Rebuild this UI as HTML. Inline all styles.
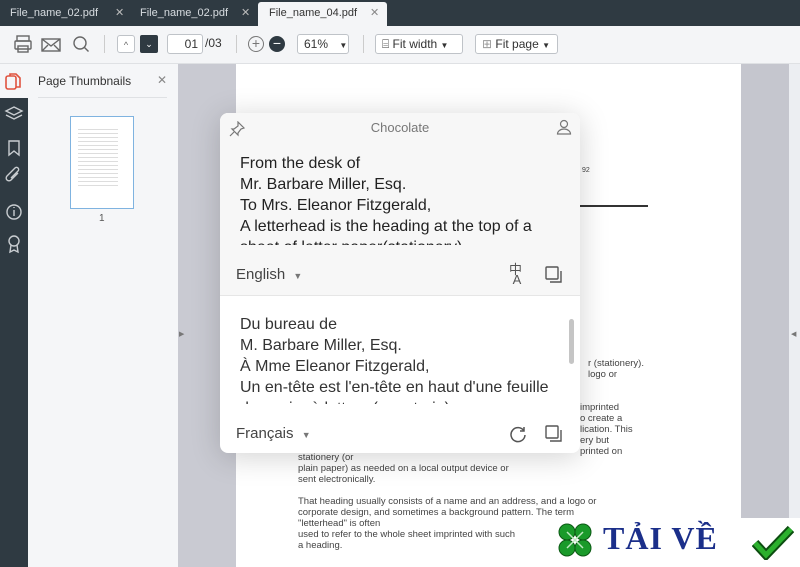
<!DOCTYPE html>
<html><head><meta charset="utf-8"><style>
*{margin:0;padding:0;box-sizing:border-box}
body{width:800px;height:567px;overflow:hidden;position:relative;font-family:"Liberation Sans","DejaVu Sans",sans-serif;background:#fff}
.abs{position:absolute}
.tabbar{left:0;top:0;width:800px;height:26px;background:#2f3a42}
.tab{top:0;height:26px;font-size:11px;color:#d8dde1;line-height:26px;white-space:nowrap}
.tb{left:0;top:26px;width:800px;height:38px;background:#f4f5f7;border-bottom:1px solid #dfe1e4}
.btn{border:1px solid #bfc3c8;border-radius:3px;background:#fff;height:20px;font-size:12px;line-height:18px;color:#333;white-space:nowrap}
.rail{left:0;top:98px;width:28px;height:469px;background:#2f3a42}
.side{left:28px;top:64px;width:150px;height:503px;background:#f5f6f8}
.gray{left:178px;top:64px;width:58px;height:503px;background:#c9cad2}
.gray2{left:741px;top:64px;width:48px;height:503px;background:#c5c6ce}
.strip{left:789px;top:64px;width:11px;height:503px;background:#eceef2}
.page{left:236px;top:64px;width:505px;height:503px;background:#fff}
.doc{font-size:9.5px;color:#444;line-height:11px}
.pop{left:220px;top:113px;width:360px;height:340px;background:#fff;border-radius:8px;box-shadow:0 4px 30px rgba(0,0,0,.18);overflow:hidden}
.ptxt{font-size:16px;color:#222;line-height:21px;left:20px;white-space:nowrap}
</style></head><body>
<div class="abs tabbar"></div>
<div class="abs tab" style="left:10px">File_name_02.pdf</div>
<div class="abs tab" style="left:115px;color:#bbb">✕</div>
<div class="abs tab" style="left:140px">File_name_02.pdf</div>
<div class="abs tab" style="left:241px;color:#bbb">✕</div>
<div class="abs" style="left:258px;top:2px;width:129px;height:24px;background:#f4f5f7;border-radius:3px 3px 0 0"></div>
<div class="abs tab" style="left:269px;color:#333">File_name_04.pdf</div>
<div class="abs tab" style="left:370px;color:#888">✕</div>

<div class="abs tb"></div>
<svg class="abs" style="left:14px;top:34px" width="80" height="22" fill="none" stroke="#666" stroke-width="1.4">
<rect x="3" y="2" width="12" height="5"/><rect x="1" y="7" width="16" height="8" rx="1"/><rect x="4" y="12" width="10" height="6"/>
<rect x="28" y="5" width="18" height="12"/><path d="M28 5l9 7 9-7M28 17l6-6M46 17l-6-6"/>
<circle cx="66" cy="9" r="6"/><path d="M70.5 13.5l4 4"/></svg>
<div class="abs" style="left:104px;top:35px;width:1px;height:18px;background:#ccc"></div>
<div class="abs btn" style="left:117px;top:35px;width:18px;height:18px;text-align:center;font-size:9px;color:#666">^</div>
<div class="abs" style="left:140px;top:35px;width:18px;height:18px;background:#2f3a42;border-radius:2px;color:#fff;font-size:9px;text-align:center;line-height:18px">⌄</div>
<div class="abs btn" style="left:167px;top:34px;width:36px;text-align:right;padding-right:4px">01</div>
<div class="abs" style="left:205px;top:36px;font-size:12px;color:#333">/03</div>
<div class="abs" style="left:236px;top:35px;width:1px;height:18px;background:#ccc"></div>
<div class="abs" style="left:248px;top:36px;width:16px;height:16px;border:1.3px solid #777;border-radius:50%;text-align:center;line-height:13px;color:#777;font-size:14px">+</div>
<div class="abs" style="left:269px;top:36px;width:16px;height:16px;background:#2f3a42;border-radius:50%;text-align:center;line-height:15px;color:#fff;font-size:14px">−</div>
<div class="abs btn" style="left:297px;top:34px;width:52px;padding-left:6px">61% <span style="font-size:8px;margin-left:8px">▼</span></div>
<div class="abs" style="left:363px;top:35px;width:1px;height:18px;background:#ccc"></div>
<div class="abs btn" style="left:375px;top:34px;width:88px;padding-left:6px">⌸ Fit width <span style="font-size:8px">▼</span></div>
<div class="abs btn" style="left:475px;top:34px;width:83px;padding-left:6px"><span style="color:#999">⊞</span> Fit page <span style="font-size:8px">▼</span></div>

<div class="abs" style="left:0;top:64px;width:28px;height:34px;background:#f5f6f8"></div>
<svg class="abs" style="left:5px;top:72px" width="16" height="18" fill="none" stroke="#e0533f" stroke-width="1.6"><rect x="1" y="4" width="10" height="13" rx="2"/><path d="M5 4V2h6l4 4v9h-4"/></svg>
<div class="abs rail"></div>
<svg class="abs" style="left:4px;top:105px" width="20" height="160" fill="none" stroke="#c9cdd1" stroke-width="1.4">
<path d="M10 2l8 4-8 4-8-4zM2 10l8 4 8-4"/>
<path d="M5 36h10v14l-5-4-5 4z"/>
<path d="M14 68l-7 7a2.5 2.5 0 0 1-4-4l8-8a1.7 1.7 0 0 1 3 3l-7 7"/>
<circle cx="10" cy="107" r="7"/><path d="M10 105v6M10 102v1"/>
<circle cx="10" cy="136" r="5"/><path d="M7 140l-1 7 4-2 4 2-1-7"/></svg>
<div class="abs side"></div>
<div class="abs" style="left:38px;top:74px;font-size:12px;color:#333">Page Thumbnails</div>
<div class="abs" style="left:157px;top:73px;font-size:12px;color:#888">✕</div>
<div class="abs" style="left:38px;top:97px;width:129px;height:1px;background:#dfe1e4"></div>
<div class="abs" style="left:70px;top:116px;width:64px;height:93px;background:#fff;border:1.5px solid #7fb3e0"></div>
<div class="abs" style="left:78px;top:126px;width:40px;height:60px;background:repeating-linear-gradient(#fff 0 3px,#ddd 3px 4px)"></div>
<div class="abs" style="left:99px;top:213px;font-size:10px;color:#555">1</div>

<div class="abs gray"></div>
<div class="abs" style="left:179px;top:330px;font-size:7px;color:#777">▶</div>
<div class="abs page"></div>
<div class="abs gray2"></div>
<div class="abs strip"></div>
<div class="abs" style="left:791px;top:330px;font-size:7px;color:#777">◀</div>

<div class="abs doc" style="left:582px;top:165px;font-size:7px">92</div>
<div class="abs" style="left:580px;top:205px;width:68px;height:2px;background:#333"></div>
<div class="abs doc" style="left:588px;top:358px">r (stationery).<br>logo or</div>
<div class="abs doc" style="left:580px;top:402px">imprinted<br>o create a<br>lication. This<br>ery but<br>printed on</div>
<div class="abs doc" style="left:298px;top:452px">stationery (or<br>plain paper) as needed on a local output device or<br>sent electronically.<br><br>That heading usually consists of a name and an address, and a logo or<br>corporate design, and sometimes a background pattern. The term<br>"letterhead" is often<br>used to refer to the whole sheet imprinted with such<br>a heading.</div>

<div class="abs pop">
 <div class="abs" style="left:0;top:0;width:360px;height:183px;background:#f7f7f7;border-bottom:1px solid #e6e6e6"></div>
 <svg class="abs" style="left:9px;top:8px" width="16" height="16" fill="none" stroke="#777" stroke-width="1.2"><path d="M9 1l6 6-3 1-3 4 0 2-6-6 2 0 4-3zM5 11l-4 4"/></svg>
 <div class="abs" style="left:0;top:7px;width:360px;text-align:center;font-size:13px;color:#777">Chocolate</div>
 <svg class="abs" style="left:336px;top:6px" width="16" height="16" fill="none" stroke="#777" stroke-width="1.2"><circle cx="8" cy="5" r="3.5"/><path d="M1.5 15a6.5 5 0 0 1 13 0z"/></svg>
 <div class="abs" style="left:0;top:40px;width:360px;height:92px;overflow:hidden">
  <div class="abs ptxt" style="top:0">From the desk of<br>Mr. Barbare Miller, Esq.<br>To Mrs. Eleanor Fitzgerald,<br>A letterhead is the heading at the top of a<br>sheet of letter paper(stationery)</div>
 </div>
 <div class="abs" style="left:16px;top:153px;font-size:15px;color:#444">English <span style="font-size:9px;color:#777;margin-left:4px">▼</span></div>
 <div class="abs" style="left:289px;top:152px;font-size:13px;color:#555;line-height:10px">中<br>&nbsp;A</div>
 <svg class="abs" style="left:325px;top:153px" width="18" height="18" fill="none" stroke="#555" stroke-width="1.4"><rect x="1" y="1" width="12" height="12" rx="1"/><path d="M16 5v11H5"/></svg>
 <div class="abs" style="left:0;top:201px;width:360px;height:90px;overflow:hidden">
  <div class="abs ptxt" style="top:0;color:#333">Du bureau de<br>M. Barbare Miller, Esq.<br>À Mme Eleanor Fitzgerald,<br>Un en-tête est l'en-tête en haut d'une feuille<br>de papier à lettres (papeterie)</div>
 </div>
 <div class="abs" style="left:349px;top:206px;width:5px;height:45px;background:#c5c5c5;border-radius:3px"></div>
 <div class="abs" style="left:16px;top:312px;font-size:15px;color:#444">Français <span style="font-size:9px;color:#777;margin-left:4px">▼</span></div>
 <svg class="abs" style="left:289px;top:312px" width="18" height="18" fill="none" stroke="#555" stroke-width="1.5"><path d="M15 6A7 7 0 1 0 16 10M15 2v4h-4"/></svg>
 <svg class="abs" style="left:325px;top:312px" width="18" height="18" fill="none" stroke="#555" stroke-width="1.4"><rect x="1" y="1" width="12" height="12" rx="1"/><path d="M16 5v11H5"/></svg>
</div>

<div class="abs" style="left:553px;top:518px;width:247px;height:49px;background:#fff"></div>
<svg class="abs" style="left:555px;top:520px" width="40" height="42"><g fill="#1a9a2a" stroke="#0c5a14" stroke-width="1"><circle cx="12" cy="12" r="8"/><circle cx="28" cy="12" r="8"/><circle cx="12" cy="28" r="8"/><circle cx="28" cy="28" r="8"/></g><path d="M20 20l8 8M20 20l-8 8M20 20l8-8M20 20l-8-8" stroke="#bfe8c0" stroke-width="1.5"/></svg>
<div class="abs" style="left:603px;top:520px;font-family:'Liberation Serif',serif;font-weight:bold;font-size:32px;color:#1b2f8a;letter-spacing:1px">TẢI VỀ</div>
<svg class="abs" style="left:752px;top:525px" width="42" height="35"><path d="M3 18l11 12L39 4" fill="none" stroke="#0c4d10" stroke-width="9"/><path d="M3 18l11 12L39 4" fill="none" stroke="#2bb02d" stroke-width="5"/></svg>
</body></html>
